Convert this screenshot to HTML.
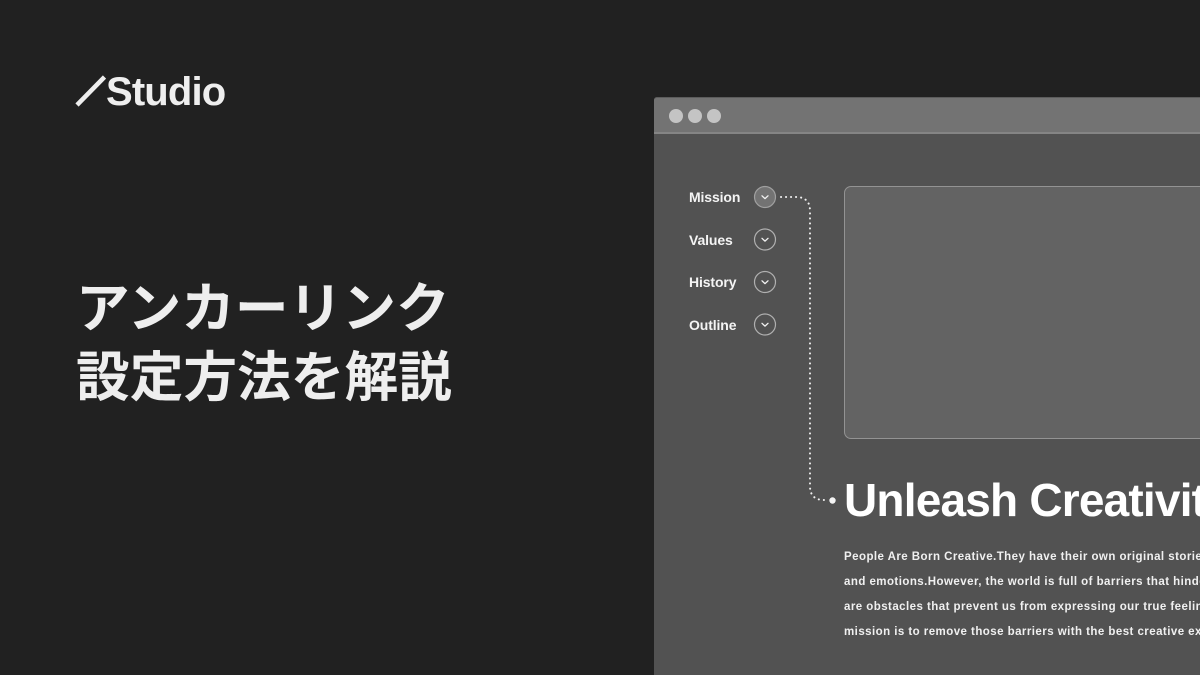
<!DOCTYPE html>
<html lang="ja">
<head>
<meta charset="utf-8">
<title>Studio</title>
<style>
html,body{margin:0;padding:0;background:#212121;}
#p{position:relative;width:1200px;height:675px;overflow:hidden;background:#212121;font-family:"Liberation Sans","Noto Sans CJK JP",sans-serif;}
#p div{position:absolute;white-space:nowrap;}
.jp{left:76px;color:#eeeeee;font-family:"Noto Sans CJK JP","Liberation Sans",sans-serif;font-weight:700;font-size:53.7px;line-height:70px;letter-spacing:0px;}
.nav{left:689px;color:#f4f4f4;font-size:14px;font-weight:700;line-height:18px;letter-spacing:-.12px;}
.b{left:844px;color:#f0f0f0;font-size:11.5px;font-weight:700;line-height:16px;letter-spacing:.45px;}
</style>
</head>
<body>
<div id="p">
  <svg style="position:absolute;left:0;top:0" width="1200" height="675" viewBox="0 0 1200 675">
    <line x1="77" y1="105" x2="104.500" y2="77" stroke="#eeeeee" stroke-width="4.500"/>
  </svg>
  <div style="left:106px;top:68px;color:#eeeeee;font-size:40px;font-weight:700;line-height:48px;letter-spacing:-.85px">Studio</div>
  <div class="jp" style="top:270px">アンカーリンク</div>
  <div class="jp" style="top:339px">設定方法を解説</div>

  <div style="left:654px;top:97px;width:546px;height:578px;background:#525252;border-top-left-radius:3px;"></div>
  <div style="left:654px;top:97px;width:546px;height:34px;background:#737373;border-top:1px solid #5c5c5c;border-bottom:2px solid #858585;box-sizing:content-box;border-top-left-radius:3px"></div>
  <div style="left:669px;top:109px;width:14px;height:14px;border-radius:50%;background:#c4c4c4"></div>
  <div style="left:687.500px;top:109px;width:14px;height:14px;border-radius:50%;background:#c4c4c4"></div>
  <div style="left:707px;top:109px;width:14px;height:14px;border-radius:50%;background:#c4c4c4"></div>

  <div class="nav" style="top:188px">Mission</div>
  <div class="nav" style="top:231px">Values</div>
  <div class="nav" style="top:273px">History</div>
  <div class="nav" style="top:316px">Outline</div>

  <svg style="position:absolute;left:0;top:0" width="1200" height="675" viewBox="0 0 1200 675">
    <g fill="none" stroke="#b0b0b0" stroke-width="1.200">
      <circle cx="765" cy="197" r="10.500" fill="#737373" stroke="#a0a0a0"/>
      <circle cx="765" cy="239.500" r="10.500"/>
      <circle cx="765" cy="282" r="10.500"/>
      <circle cx="765" cy="324.500" r="10.500"/>
    </g>
    <g fill="none" stroke="#f2f2f2" stroke-width="1.300" stroke-linecap="round" stroke-linejoin="round">
      <path d="M762 195.800l3 2.800 3-2.800"/>
      <path d="M762 238.300l3 2.800 3-2.800"/>
      <path d="M762 280.800l3 2.800 3-2.800"/>
      <path d="M762 323.300l3 2.800 3-2.800"/>
    </g>
    <path d="M781 197H796Q810 197 810 211V486Q810 500 824 500H826" fill="none" stroke="#f0f0f0" stroke-width="2" stroke-linecap="round" stroke-dasharray="0.100 4.900"/>
    <circle cx="832.500" cy="500.500" r="3.200" fill="#f4f4f4"/>
  </svg>

  <div style="left:844px;top:186px;width:370px;height:253px;box-sizing:border-box;background:#636363;border:1.500px solid #939393;border-radius:7px"></div>

  <div style="left:844px;top:472px;color:#ffffff;font-size:46px;font-weight:700;line-height:56px;letter-spacing:-.8px">Unleash Creativity</div>

  <div class="b" style="top:549px">People Are Born Creative.They have their own original stories</div>
  <div class="b" style="top:574px">and emotions.However, the world is full of barriers that hinder</div>
  <div class="b" style="top:599px">are obstacles that prevent us from expressing our true feelings</div>
  <div class="b" style="top:624px">mission is to remove those barriers with the best creative experience</div>
</div>
</body>
</html>
